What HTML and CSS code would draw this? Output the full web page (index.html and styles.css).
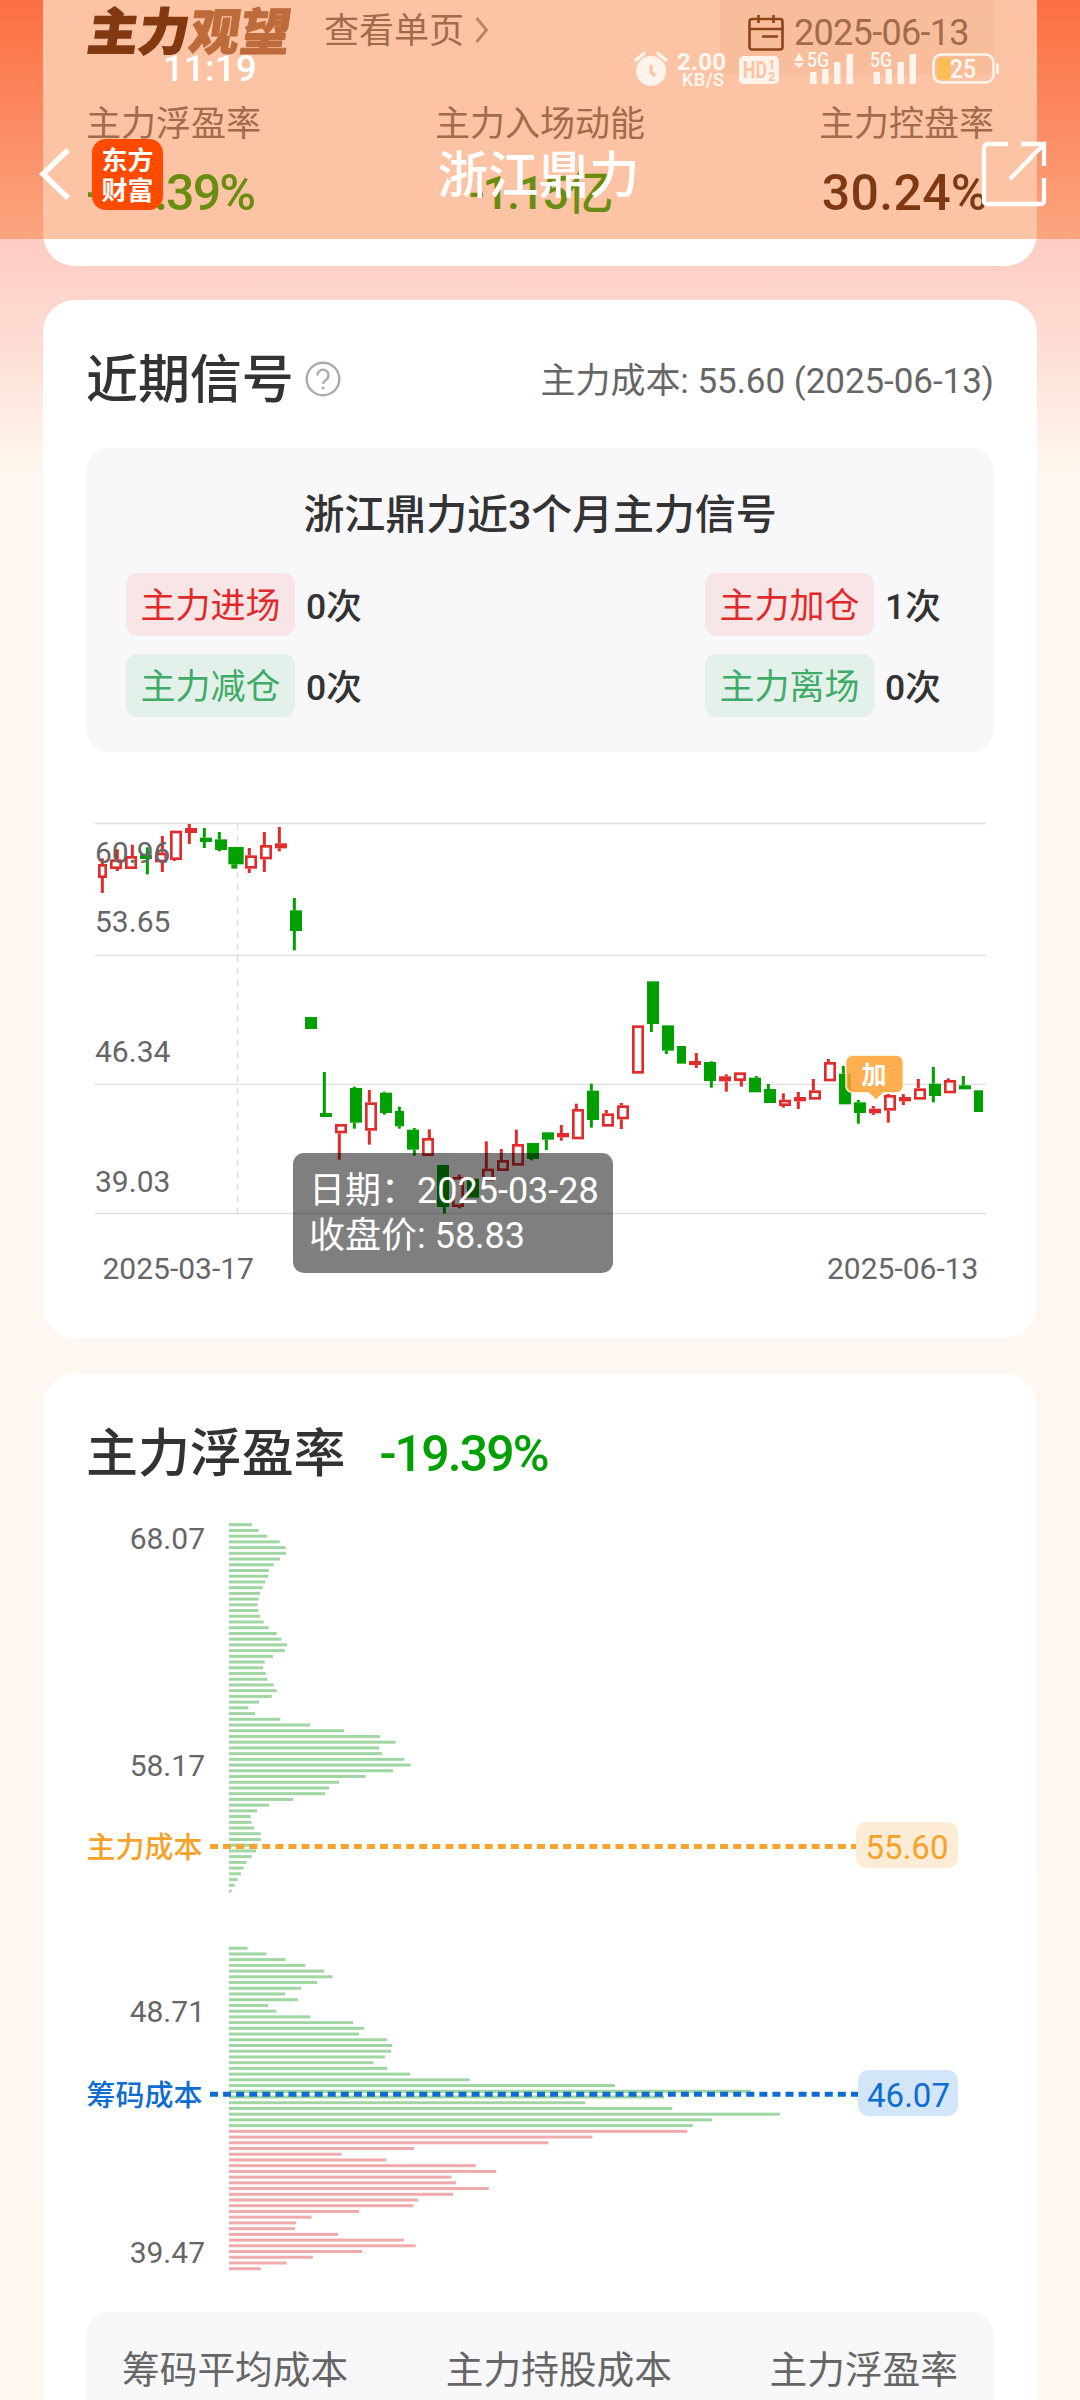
FILE: index.html
```html
<!DOCTYPE html>
<html lang="zh-CN">
<head>
<meta charset="utf-8">
<title>浙江鼎力</title>
<link rel="stylesheet" href="styles.css">
</head>
<body>
<div class="page">
  <header class="topbar">
    <div class="status">
      <span class="clock">11:19</span>
      <svg class="status-icons" viewBox="630 44 376 48" width="376" height="48">
        <g fill="#fff4ec">
          <circle cx="651" cy="71" r="15"/>
          <path d="M636 60l8-6.500M666 60l-8-6.500" stroke="#fff4ec" stroke-width="3.500" stroke-linecap="round"/>
          <path d="M651 65v7l4 4" fill="none" stroke="#fcc5a6" stroke-width="3.500"/>
          <rect x="739" y="56" width="40" height="28" rx="5"/>
          <path d="M794 61l5-8 5 8zM794 63l5 5 5-5z"/>
          <path d="M810 72h6.500v12h-6.500zM822 69h6.500v15h-6.500zM834 62h6.500v22h-6.500zM846.500 54h6.500v30h-6.500z"/>
          <path d="M873.500 72h6.500v12h-6.500zM885.500 69h6.500v15h-6.500zM897.500 62h6.500v22h-6.500zM909.500 54h6.500v30h-6.500z"/>
          <rect x="996" y="63" width="3" height="11" rx="1.500"/>
        </g>
        <rect x="933.500" y="54.500" width="60" height="28" rx="8" fill="none" stroke="#fff4ec" stroke-width="2.500"/>
        <path d="M950.500 57.500h-9a4 4 0 0 0-4 4v14a4 4 0 0 0 4 4h9z" fill="#fdbd55"/>
        <text class="net" x="677" y="69.500" textLength="49">2.00</text>
        <text class="net-unit" x="682" y="86" textLength="42">KB/S</text>
        <text class="hd" x="743" y="78" textLength="24" lengthAdjust="spacingAndGlyphs">HD</text>
        <text class="hd-sub" x="768" y="69">1</text>
        <text class="hd-sub" x="768" y="81">2</text>
        <text class="gen" x="807" y="67" textLength="22" lengthAdjust="spacingAndGlyphs">5G</text>
        <text class="gen" x="870" y="67" textLength="22" lengthAdjust="spacingAndGlyphs">5G</text>
        <text class="batt" x="950" y="78" textLength="26" lengthAdjust="spacingAndGlyphs">25</text>
      </svg>
    </div>
    <nav class="nav">
      <div class="nav-left">
        <svg width="34" height="56" viewBox="0 0 34 56"><path d="M29 4L4 28l25 24" fill="none" stroke="#fff" stroke-width="5.500"/></svg>
        <div class="app-logo"><span>东方</span><span>财富</span></div>
      </div>
      <h1 class="nav-title">浙江鼎力</h1>
      <svg class="share" width="66" height="66" viewBox="0 0 66 66"><path d="M27 3H7a4 4 0 0 0-4 4v53a3 3 0 0 0 3 3h54a3 3 0 0 0 3-3V37M40 3h23v22M63 3L29 38" fill="none" stroke="#fff" stroke-width="4.300"/></svg>
    </nav>
  </header>

  <section class="card overview">
    <div class="overview-head">
      <div class="verdict"><b>主力</b><i>观望</i></div>
      <span class="link">查看单页</span>
      <svg class="chev" width="14" height="28" viewBox="0 0 14 28"><path d="M1.500 2l10 12-10 12" fill="none" stroke="#9c8a82" stroke-width="2.800"/></svg>
      <div class="date-box">
        <svg width="36" height="38" viewBox="0 0 36 38"><path d="M4 5h28a2.500 2.500 0 0 1 2.500 2.500V33a2.500 2.500 0 0 1-2.500 2.500H4A2.500 2.500 0 0 1 1.500 33V7.500A2.500 2.500 0 0 1 4 5zM1.500 15h33M10.500 1v8M25.500 1v8M14 22.500h16" fill="none" stroke="#43210f" stroke-width="2.600"/></svg>
        <span>2025-06-13</span>
      </div>
    </div>
    <div class="metrics">
      <div class="metric"><span>主力浮盈率</span><strong class="down">-19.39%</strong></div>
      <div class="metric mid"><span>主力入场动能</span><strong class="down flow">-1.15亿</strong></div>
      <div class="metric end"><span>主力控盘率</span><strong>30.24%</strong></div>
    </div>
  </section>

  <section class="card signals">
    <div class="head">
      <h2>近期信号</h2>
      <svg class="help" width="36" height="36" viewBox="0 0 36 36"><circle cx="18" cy="18" r="16.300" fill="none" stroke="#aaa" stroke-width="2.400"/><path d="M12.500 14.500a5.500 5.500 0 1 1 8.700 4.200c-2 1.400-3.200 2.300-3.200 4.300" fill="none" stroke="#aaa" stroke-width="2.300"/><circle cx="18" cy="27" r="1.600" fill="#aaa"/></svg>
      <span class="cost">主力成本: 55.60 (2025-06-13)</span>
    </div>
    <div class="summary">
      <h3>浙江鼎力近3个月主力信号</h3>
      <div class="tags">
        <div><span class="tag in">主力进场</span><b>0次</b></div>
        <div><span class="tag in">主力加仓</span><b>1次</b></div>
        <div><span class="tag out">主力减仓</span><b>0次</b></div>
        <div><span class="tag out">主力离场</span><b>0次</b></div>
      </div>
    </div>
    <div class="kline">
      <svg viewBox="43 752 994 586" width="994" height="586">
        <path d="M95 823.500H986M95 955.300H986M95 1084.300H986M95 1213.500H986" stroke="#dedede" stroke-width="1.300"/>
        <path d="M237.500 824V1213" stroke="#dadada" stroke-width="1.300" stroke-dasharray="6 6"/>
        <g id="candles" transform="translate(80 800) scale(.333333)"></g>
        <g class="axis">
          <text x="95" y="863">60.96</text>
          <text x="95" y="932">53.65</text>
          <text x="95" y="1062">46.34</text>
          <text x="95" y="1192">39.03</text>
          <text x="102.500" y="1279">2025-03-17</text>
          <text x="827" y="1279">2025-06-13</text>
        </g>
        <path d="M852.500 1056h44a6 6 0 0 1 6 6v24a6 6 0 0 1-6 6h-13l-7.500 7-7.500-7h-16a6 6 0 0 1-6-6v-24a6 6 0 0 1 6-6z" fill="#ff9f2e" fill-opacity=".84" stroke="#fff3e0" stroke-width="2.500" paint-order="stroke"/>
        <text class="pin" x="861.500" y="1084">加</text>
      </svg>
      <div class="tip"><div>日期：2025-03-28</div><div>收盘价: 58.83</div></div>
    </div>
  </section>

  <section class="card profit">
    <div class="head">
      <h2>主力浮盈率</h2>
      <strong class="rate">-19.39%</strong>
    </div>
    <svg viewBox="43 1510 994 802" width="994" height="802">
      <g id="chips"></g>
      <g class="axis right">
        <text x="205" y="1549">68.07</text>
        <text x="205" y="1776">58.17</text>
        <text x="205" y="2022">48.71</text>
        <text x="205" y="2263">39.47</text>
      </g>
      <path d="M210 1846.500H856" stroke="#f5a42f" stroke-width="5" stroke-dasharray="8 5.080"/>
      <path d="M210 2094.300H858" stroke="#0f6cd0" stroke-width="5" stroke-dasharray="8 5.080"/>
      <text class="lab gold" x="86.500" y="1857.500">主力成本</text>
      <text class="lab blue" x="86.500" y="2105.500">筹码成本</text>
      <rect x="856" y="1822" width="102" height="46" rx="10" fill="#fdecd6"/>
      <rect x="858" y="2070" width="100" height="46" rx="10" fill="#d3e5f9"/>
      <text class="val gold" x="907" y="1858.500">55.60</text>
      <text class="val blue" x="908.500" y="2106.500">46.07</text>
    </svg>
    <div class="totals"><span>筹码平均成本</span><span>主力持股成本</span><span>主力浮盈率</span></div>
  </section>
</div>
<script src="chart.js"></script>
</body>
</html>
```

FILE: styles.css
```css
* { box-sizing: border-box; margin: 0; padding: 0; }
body { font-family: Roboto, "Noto Sans CJK SC", sans-serif; color: #333; font-size: 35px; }
svg { display: block; flex: none; }
.page {
  position: relative; width: 1080px; height: 2400px; overflow: hidden; padding: 0 43px;
  display: flex; flex-direction: column;
  background: linear-gradient(#ff6c57 0, #fecbc2 239px, #fddcd3 340px, #fff6ed 462px, #fff7f1 480px, #fff8f1 100%);
}
.card { flex: none; background: #fff; border-radius: 32px; }

.topbar { position: absolute; left: 0; top: 0; width: 1080px; height: 239px; z-index: 2; background: rgba(248, 115, 38, .42); color: #fff; }
.status { display: flex; justify-content: space-between; align-items: center; padding: 44px 74px 0 163px; height: 92px; }
.clock { font-size: 37px; font-weight: 500; }
.net, .net-unit, .gen, .batt { fill: #fff8f2; }
.net { font: 700 24px Roboto, sans-serif; }
.net-unit { font: 500 18px Roboto, sans-serif; }
.hd { font: 700 23px Roboto, sans-serif; fill: #fbc4a5; }
.hd-sub { font: 700 13px Roboto, sans-serif; fill: #fbc4a5; }
.gen { font: 500 20px Roboto, sans-serif; }
.batt { font: 500 25px Roboto, sans-serif; }
.nav { display: grid; grid-template-columns: 1fr auto 1fr; align-items: center; height: 164px; padding: 0 33px 0 39px; }
.nav-left { display: flex; align-items: center; gap: 19px; }
.app-logo { width: 71px; height: 71px; border-radius: 14px; background: #ff4a00; display: flex; flex-direction: column; align-items: center; justify-content: center; font: 700 26px/30px "Noto Sans CJK SC", sans-serif; }
.nav-title { font-size: 50.500px; font-weight: 500; line-height: 60px; padding: 4px 9px 0 0; }
.share { justify-self: end; }

.overview { height: 266px; border-radius: 0 0 32px 32px; padding: 0 43px; }
.overview-head { height: 69px; display: flex; align-items: center; padding-bottom: 14px; }
.verdict { font-family: "Noto Sans CJK SC", sans-serif; font-size: 50px; line-height: 58px; font-weight: 900; letter-spacing: .8px; transform: skewX(-8deg); width: 209px; margin-left: 3px; white-space: nowrap; }
.verdict b { font-weight: 900; color: #2f1000; -webkit-text-stroke: 1.500px #2f1000; }
.verdict i { font-style: normal; color: #95664d; -webkit-text-stroke: 1px #95664d; }
.link { color: #666; margin-left: 26px; }
.chev { margin: 4px 0 0 11px; }
.date-box { margin: -40px 1px -25px auto; width: 273px; height: 109px; border-radius: 8px; background: #f8f4f2; display: flex; align-items: center; gap: 10px; padding: 25px 0 0 28px; color: #666; font-size: 36px; letter-spacing: -.7px; }
.metrics { display: grid; grid-template-columns: 1fr 1fr 1fr; padding-top: 30px; }
.metric { display: flex; flex-direction: column; color: #666; line-height: 52px; }
.metric.mid { align-items: center; }
.metric.end { align-items: flex-end; }
.metric strong { font-size: 50px; font-weight: 500; line-height: 80px; letter-spacing: .3px; color: #271006; margin-top: 2px; }
.metric.end strong { margin-right: 6px; }
.metric .down { color: #00a000; letter-spacing: -1.900px; }
.metric .flow { font-size: 47px; letter-spacing: -2.300px; }

.head { display: flex; align-items: center; padding: 0 43px; }
.head h2 { font-size: 52px; font-weight: 500; line-height: 60px; letter-spacing: -.1px; padding-top: 4px; }
.signals { margin-top: 34px; height: 1038px; }
.signals .head { height: 148px; padding-top: 10px; }
.help { margin-left: 11px; }
.cost { margin-left: auto; color: #666; padding-bottom: 4px; letter-spacing: -.05px; }
.summary { margin: 0 43px; height: 304px; border-radius: 24px; background: #f8f8fa; padding: 37px 40px 0; }
.summary h3 { font-size: 41px; font-weight: 500; text-align: center; line-height: 60px; letter-spacing: -.1px; }
.tags { display: grid; grid-template-columns: 579px auto; gap: 18px 0; margin-top: 28px; }
.tags div { display: flex; align-items: center; gap: 11px; height: 63px; }
.tag { width: 169px; height: 63px; line-height: 62px; padding-top: 3px; border-radius: 11px; text-align: center; }
.tag.in { color: #e02a2a; background: #f8e6e7; }
.tag.out { color: #3fab68; background: #e4f1ea; }
.tags b { font-weight: 500; font-size: 35.500px; padding-bottom: 2px; }
.kline { position: relative; height: 586px; }
.axis { font: 30px Roboto, sans-serif; fill: #666; }
.axis.right { text-anchor: end; }
.pin { font: 700 25px "Noto Sans CJK SC", sans-serif; fill: #fff; }
.tip { position: absolute; left: 250px; top: 401px; width: 320px; height: 120px; padding: 16px 0 0 16px; border-radius: 11px; background: rgba(0, 0, 0, .5); color: #fff; font-size: 36px; line-height: 45px; white-space: nowrap; }

.profit { margin-top: 36px; height: 1100px; }
.profit .head { height: 136px; padding-top: 22px; gap: 34px; }
.rate { color: #00a000; font-size: 50px; font-weight: 500; letter-spacing: -1.900px; padding-top: 2px; }
.lab { font: 500 29px "Noto Sans CJK SC", sans-serif; }
.val { font: 33px Roboto, sans-serif; text-anchor: middle; }
.gold { fill: #f5a22b; }
.blue { fill: #0f6cd0; }
.totals { margin: 0 43px; height: 200px; border-radius: 24px; background: #f8f8fa; padding: 28px 36px 0; display: flex; justify-content: space-between; color: #666; font-size: 37.700px; line-height: 60px; }
```

FILE: chart.js
```javascript
const NS = "http://www.w3.org/2000/svg";
const RED = "#e22c2c", GREEN = "#00a000";

function rect(parent, x, y, w, h, fill, stroke) {
  const r = document.createElementNS(NS, "rect");
  r.setAttribute("x", x);
  r.setAttribute("y", y);
  r.setAttribute("width", w);
  r.setAttribute("height", h);
  r.setAttribute("fill", fill);
  if (stroke) {
    r.setAttribute("stroke", stroke);
    r.setAttribute("stroke-width", 8);
  }
  parent.appendChild(r);
}

// Each candle: direction, body x, body width, wick offset, high, body top, body bottom, low
const candles = `r 54 27 13 175 192 234 279
r 90 36 22 148 178 207 213
r 135 36 22 134 168 207 207
g 180 36 22 142 165 177 223
r 225 36 22 108 158 187 216
r 270 36 13 92 92 180 183
r 315 36 13 72 84 99 132
g 360 36 13 84 113 126 144
g 405 36 13 96 118 150 154
g 445 46 18 141 141 193 206
r 495 36 13 144 166 206 219
r 540 36 13 96 135 178 216
r 585 36 13 81 130 145 154
g 630 36 13 294 331 393 451
g 675 36 13 651 651 687 687
g 720 36 13 816 939 951 951
r 765 36 13 972 972 1000 1079
g 810 36 13 860 864 968 986
r 855 36 13 870 907 992 1034
g 900 36 13 875 878 939 944
g 945 27 13 920 933 979 986
g 981 36 22 984 989 1049 1067
r 1026 36 22 988 1014 1068 1068
g 1071 36 22 1095 1095 1221 1241
r 1116 36 22 1124 1131 1221 1225
g 1161 36 18 1136 1136 1193 1193
r 1206 36 13 1024 1106 1142 1142
r 1251 36 13 1047 1080 1113 1113
r 1296 36 13 989 1032 1097 1097
g 1341 36 13 1029 1029 1077 1081
g 1386 36 13 997 997 1019 1050
r 1431 36 13 975 999 1012 1022
r 1476 36 13 911 927 1018 1018
g 1521 36 13 851 872 960 983
r 1566 36 13 930 940 980 980
r 1611 36 13 909 916 958 987
r 1656 36 18 676 676 821 821
g 1701 36 13 544 544 672 696
g 1746 36 13 676 676 752 762
g 1791 27 13 738 738 791 791
r 1827 36 22 759 783 795 804
g 1872 36 22 784 786 843 863
r 1917 36 22 823 829 844 875
r 1962 36 22 817 817 843 860
g 2007 36 22 828 833 877 877
g 2052 36 13 852 867 909 909
r 2097 36 13 880 899 918 923
r 2142 36 13 876 891 904 927
r 2187 36 13 837 871 899 899
r 2232 36 13 777 786 844 844
g 2277 36 13 798 821 913 913
g 2322 36 13 900 907 939 971
r 2367 36 13 918 926 940 945
r 2412 36 13 882 885 932 968
r 2457 36 13 882 891 904 915
r 2502 36 13 837 865 899 899
g 2547 36 13 801 851 888 907
r 2592 36 13 835 840 880 880
g 2637 36 13 828 856 868 868
g 2682 27 13 871 871 936 936`;

const candleLayer = document.getElementById("candles");
for (const line of candles.split("\n")) {
  const [dir, ...n] = line.split(" ");
  const [x, w, off, hi, top, bot, lo] = n.map(Number);
  const color = dir === "r" ? RED : GREEN;
  const wick = w === 46 ? 18 : 9;
  const wx = x + off - wick / 2;
  if (top > hi) rect(candleLayer, wx, hi, wick, top - hi, color);
  if (lo > bot) rect(candleLayer, wx, bot, wick, lo - bot, color);
  if (dir === "g" || bot - top < 18) rect(candleLayer, x, top, w, bot - top, color);
  else rect(candleLayer, x + 4, top + 4, w - 8, bot - top - 8, "none", color);
}

// Chip distribution: bar lengths in px, from the highest price level to the lowest
const upper = [69,89,115,152,170,171,153,134,119,117,109,101,93,89,86,88,93,104,119,143,157,174,168,132,107,102,110,115,134,143,128,90,58,78,154,243,345,453,500,451,459,525,545,492,410,330,300,288,192,120,84,65,68,76,95,96,85,81,68,53,44,36,26,17,8].map(v => v / 3);
const lower = [47,95,143,193,241,262,223,182,142,174,99,120,206,314,342,329,400,413,410,394,365,400,458,609,976,1320,1100,901,1121,1393,1222,1173,1159,919,808,468,285,398,624,676,562,574,657,567,478,466,329,209,170,167,276,442,472,337,212,146,80].map(v => v / 2.529);
const chipLayer = document.getElementById("chips");
const PITCH = 5.723;
upper.forEach((w, i) => rect(chipLayer, 229, 1523.2 + i * PITCH, w, 3, "#9fd6a2"));
lower.forEach((w, i) => rect(chipLayer, 229, 1523.2 + (i + 74) * PITCH, w, 3, i < 32 ? "#9fd6a2" : "#efabab"));
```
